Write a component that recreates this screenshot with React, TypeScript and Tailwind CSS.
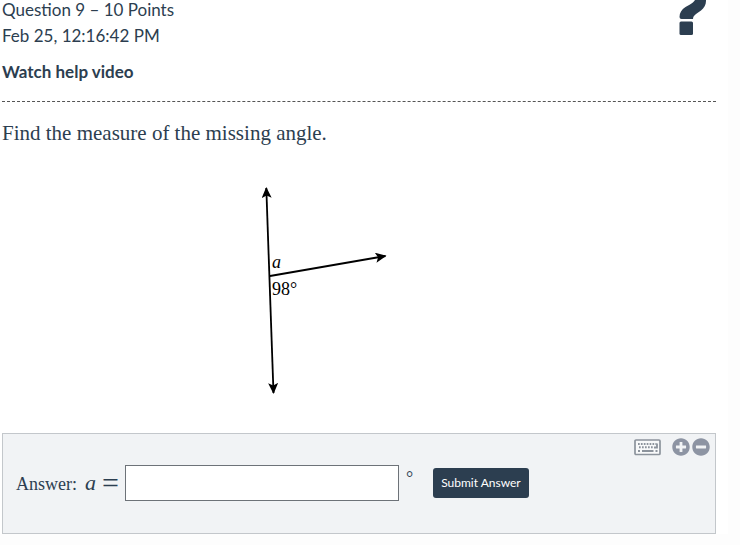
import { useState } from "react";
import type { FormEvent } from "react";
import { FaMinusCircle, FaPlusCircle } from "react-icons/fa";

function QuestionMark() {
  return (
    <svg width="28" height="36" viewBox="0 3 28 36" fill="#2c3e50" aria-hidden="true">
      <path d="M27 0v4c0 4-2 7-5 9.500l-5 3.500c-2 1.500-3 3-3 5H2.500Q.5 22 .5 20c0-4 2-7.500 6-10L11 7.500C13 6 15 5 16 3V0z" />
      <rect x="0.500" y="24.500" width="13.500" height="13.500" rx="1.500" />
    </svg>
  );
}

function KeyboardIcon() {
  return (
    <svg width="27" height="17" viewBox="0 0 27 17" fill="none" stroke="#8c939c" aria-hidden="true">
      <rect x="1" y="1" width="25" height="14.500" rx="1" strokeWidth="1.700" fill="#f8f9fa" />
      <path d="M4 5h18.500" strokeWidth="2" strokeDasharray="1.700 1.200" />
      <path d="M5 8.300h14" strokeWidth="2" strokeDasharray="1.700 1.300" />
      <path d="M4 12h2M8 12h11.500M21.500 12h2M23 4.500v4h-3" strokeWidth="1.800" />
    </svg>
  );
}

function AngleDiagram() {
  return (
    <svg
      className="mx-auto block"
      width="300"
      height="285"
      viewBox="209 148 300 285"
      role="img"
      aria-label="Straight line with a ray forming angles a and 98°"
    >
      <defs>
        <marker
          id="arrow"
          markerUnits="userSpaceOnUse"
          markerWidth="12"
          markerHeight="12"
          refX="10"
          refY="5"
          orient="auto-start-reverse"
        >
          <path d="M0 0L11 5L0 10L2.500 5z" />
        </marker>
      </defs>
      <g stroke="#000" strokeWidth="1.800" fill="none">
        <path d="M266.300 188L273.500 393" markerStart="url(#arrow)" markerEnd="url(#arrow)" />
        <path d="M270 276L385.500 256" markerEnd="url(#arrow)" />
      </g>
      <g className="font-['Liberation_Serif',serif] text-[18px]">
        <text x="272" y="268" className="italic">
          a
        </text>
        <text x="272" y="295">
          98°
        </text>
      </g>
    </svg>
  );
}

export default function App() {
  const [answer, setAnswer] = useState("");

  const handleSubmit = (e: FormEvent) => {
    e.preventDefault();
  };

  return (
    <div className="min-h-screen overflow-hidden bg-[#fdfdfd] pr-3 text-[#2c3e50]">
      <main className="bg-white pr-3 pl-0.5">
        <header className="flex items-start justify-between border-b border-dashed border-[#555] pr-[9px] pb-4 font-['Lato',sans-serif]">
          <div className="text-[17px] leading-[27px]">
            <p className="mb-0.5 leading-5">Question 9 – 10 Points</p>
            <p>Feb 25, 12:16:42 PM</p>
            <a href="#video" className="mt-[9px] block font-bold">
              Watch help video
            </a>
          </div>
          <button type="button" aria-label="Help">
            <QuestionMark />
          </button>
        </header>

        <p className="mt-4 font-['Liberation_Serif',serif] text-[21px] leading-[30px]">
          Find the measure of the missing angle.
        </p>

        <AngleDiagram />

        <form
          onSubmit={handleSubmit}
          className="border border-[#c3c7cb] bg-[#f1f3f5] pt-1 pb-8"
        >
          <div className="flex items-center justify-end gap-0.5 pr-[5px] text-[18px] text-[#8d94a3]">
            <button type="button" aria-label="Show keyboard" className="mr-[9px]">
              <KeyboardIcon />
            </button>
            <button type="button" aria-label="Increase text size">
              <FaPlusCircle />
            </button>
            <button type="button" aria-label="Decrease text size">
              <FaMinusCircle />
            </button>
          </div>

          <div className="mt-[9px] flex items-center pl-[13px] font-['Liberation_Serif',serif]">
            <label htmlFor="answer" className="flex items-center text-[18px]">
              <span className="flex items-baseline leading-7">
                Answer:
                <span className="ml-2 text-[22px] italic">a</span>
              </span>
              <span className="mx-1.5 text-[30px] leading-[30px]">=</span>
            </label>
            <input
              id="answer"
              type="text"
              value={answer}
              onChange={(e) => setAnswer(e.target.value)}
              className="h-9 w-[274px] border border-[#6d7278] bg-white px-2 text-[18px]"
            />
            <span className="ml-[7px] self-start text-[18px]">°</span>
            <button
              type="submit"
              className="ml-5 h-[30px] rounded-[3px] bg-[#2c3e50] px-2 font-['Lato',sans-serif] text-[12px] text-white"
            >
              Submit Answer
            </button>
          </div>
        </form>
      </main>
    </div>
  );
}
